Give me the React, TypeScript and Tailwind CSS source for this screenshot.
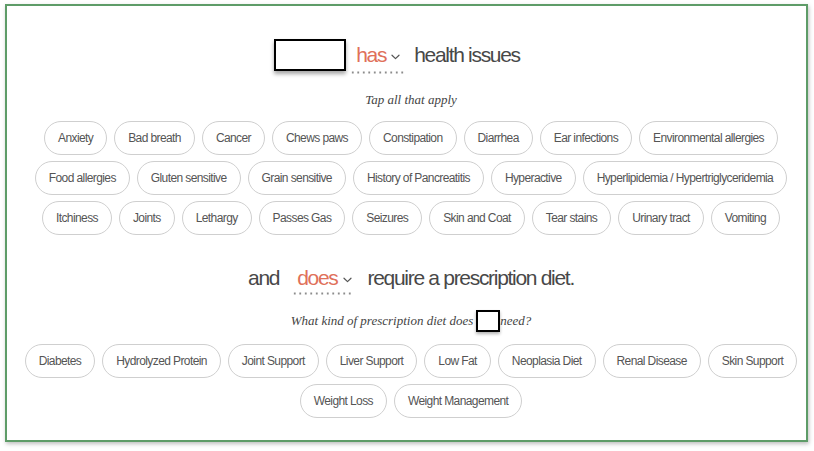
import React from "react";

const healthIssues = [
    "Anxiety", "Bad breath", "Cancer", "Chews paws", "Constipation", "Diarrhea", "Ear infections",
    "Environmental allergies", "Food allergies", "Gluten sensitive", "Grain sensitive",
    "History of Pancreatitis", "Hyperactive", "Hyperlipidemia / Hypertriglyceridemia", "Itchiness",
    "Joints", "Lethargy", "Passes Gas", "Seizures", "Skin and Coat", "Tear stains", "Urinary tract", "Vomiting",
];

const diets = [
    "Diabetes", "Hydrolyzed Protein", "Joint Support", "Liver Support", "Low Fat", "Neoplasia Diet",
    "Renal Disease", "Skin Support", "Weight Loss", "Weight Management",
];

const sans = "font-['Liberation_Sans',Arial,sans-serif]";
const serif = "font-['Liberation_Serif','Times_New_Roman',serif]";

function Chevron() {
    return (
        <svg width="9" height="6" viewBox="0 0 9 6" className="ml-[5px] mt-[3px]">
            <path d="M1 1.2 L4.5 4.6 L8 1.2" fill="none" stroke="#555" strokeWidth="1.2" strokeLinecap="round" strokeLinejoin="round"/>
        </svg>
    );
}

function Dropdown({label, className}: {label: string, className: string}) {
    return (
        <div className={`relative flex items-center h-full ${className}`}>
            <span className="text-[#e0705a]">{label}</span>
            <Chevron/>
            <div className="absolute left-[2px] right-[2px] bottom-[-3px] h-[3px] bg-[radial-gradient(circle,#8c8c8c_0.9px,transparent_1.3px)] bg-size-[5.5px_3px] bg-repeat-x"/>
        </div>
    );
}

function Chip({label}: {label: string}) {
    return (
        <div className={`h-[34px] px-[13px] flex items-center rounded-full border border-[#cfcfcf] text-[12px] tracking-[-0.6px] text-[#555] whitespace-nowrap ${sans}`}>
            {label}
        </div>
    );
}

export default function App() {
    return (
        <div className="w-[814px] h-[451px] bg-white pt-[4px] pl-[5px]">
            <div className="w-[803px] h-[438px] border-2 border-[#5e9c68] shadow-[1px_2px_4px_rgba(0,0,0,0.25)] flex flex-col items-center pl-[9px]">
                {/* first question */}
                <div className={`mt-[33px] h-[32px] flex items-center text-[21px] tracking-[-1.3px] text-[#484848] pr-[28px] ${sans}`}>
                    <div className="w-[72px] h-[32px] border-2 border-black bg-white shadow-[0_3px_4px_rgba(0,0,0,0.35)]"/>
                    <Dropdown label="has" className="ml-[2px] pl-[8px] pr-[6px]"/>
                    <span className="ml-[8px]">health issues</span>
                </div>
                <div className={`mt-[21px] h-[16px] leading-[16px] italic text-[13px] text-[#444] ${serif}`}>
                    Tap all that apply
                </div>
                <div className="mt-[13px] w-[780px] flex flex-wrap justify-center gap-x-[7px] gap-y-[6px]">
                    {healthIssues.map((item) => <Chip key={item} label={item}/>)}
                </div>

                {/* second question */}
                <div className={`mt-[29px] h-[28px] flex items-center text-[21px] tracking-[-1.3px] text-[#484848] ${sans}`}>
                    <span>and</span>
                    <Dropdown label="does" className="ml-[11px] pl-[7px] pr-[4px]"/>
                    <span className="ml-[12px]">require a prescription diet.</span>
                </div>
                <div className={`mt-[18px] h-[22px] flex items-center italic text-[13px] text-[#444] ${serif}`}>
                    <span>What kind of prescription diet does</span>
                    <div className="w-[24px] h-[22px] ml-[3px] border-2 border-black bg-white shadow-[0_2px_3px_rgba(0,0,0,0.3)]"/>
                    <span>need?</span>
                </div>
                <div className="mt-[12px] w-[784px] flex flex-wrap justify-center gap-x-[7px] gap-y-[6px]">
                    {diets.map((item) => <Chip key={item} label={item}/>)}
                </div>
            </div>
        </div>
    );
}
